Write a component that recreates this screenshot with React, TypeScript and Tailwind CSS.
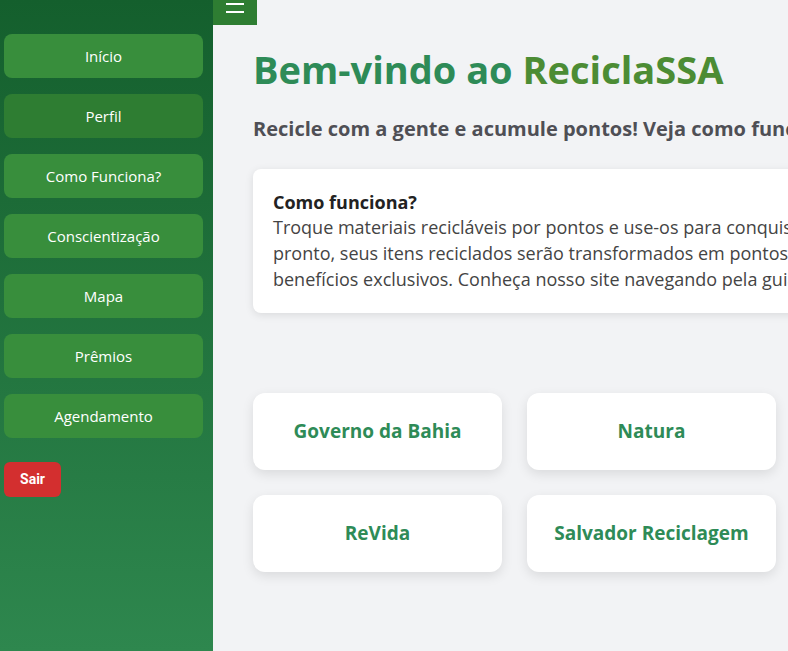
import React from "react";

const menu = ["Início", "Perfil", "Como Funciona?", "Conscientização", "Mapa", "Prêmios", "Agendamento"];
const partners = ["Governo da Bahia", "Natura", "Parceiro Verde", "ReVida", "Salvador Reciclagem", "EcoPonto"];

export default function App() {
  return (
    <div className="flex h-[651px] w-[788px] overflow-hidden bg-[#f2f3f5] font-['Open_Sans',sans-serif]">
      <aside className="flex w-[213px] shrink-0 flex-col bg-gradient-to-b from-[#145f2d] to-[#2e874e] px-[4px] pt-[34px]">
        <nav className="flex flex-col gap-[16px]">
          {menu.map((item) => (
            <button
              key={item}
              className={
                "h-[44px] w-[199px] rounded-[8px] text-[15px] text-white " +
                (item === "Perfil" ? "bg-[#2e7d32]" : "bg-[#388e3c]")
              }
            >
              {item}
            </button>
          ))}
        </nav>
        <button className="mt-[24px] h-[35px] w-[57px] rounded-[6px] bg-[#d32f2f] font-['Roboto',sans-serif] text-[14px] font-bold text-white">
          Sair
        </button>
      </aside>

      <main className="relative flex-1">
        <div className="absolute left-0 top-0 flex h-[25px] w-[44px] items-start justify-center bg-[#2e7d32] pt-[3px]">
          <svg width="18" height="12" viewBox="0 0 18 12">
            <rect x="0" y="0" width="18" height="2" fill="white" />
            <rect x="0" y="8" width="18" height="2" fill="white" />
          </svg>
        </div>

        <div className="w-[1100px] px-[40px] pt-[44px]">
          <h1 className="text-[38px] font-bold leading-[50px]">
            <span className="text-[#2e8b57]">Bem-vindo ao </span>
            <span className="text-[#4c8c34]">ReciclaSSA</span>
          </h1>
          <h2 className="mt-[20px] text-[20px] font-bold text-[#4f4f55]">
            Recicle com a gente e acumule pontos! Veja como funciona e comece a reciclar hoje mesmo.
          </h2>

          <div className="mt-[25px] w-[900px] rounded-[8px] bg-white px-[20px] py-[21px] shadow-[0_2px_8px_rgba(0,0,0,0.1)]">
            <h3 className="text-[18px] font-bold leading-[24px] text-[#222]">Como funciona?</h3>
            <p className="whitespace-nowrap text-[18px] leading-[26px] text-[#444]">
              Troque materiais recicláveis por pontos e use-os para conquistar prêmios incríveis. É simples e rápido:
              <br />
              pronto, seus itens reciclados serão transformados em pontos que poderão ser trocados por descontos e
              <br />
              benefícios exclusivos. Conheça nosso site navegando pela guia lateral.
            </p>
          </div>

          <div className="mt-[80px] grid w-[797px] grid-cols-3 gap-[25px]">
            {partners.map((p) => (
              <div
                key={p}
                className="flex h-[77px] items-center justify-center rounded-[12px] bg-white text-[19px] font-bold text-[#2e8b57] shadow-[0_4px_12px_rgba(0,0,0,0.1)]"
              >
                {p}
              </div>
            ))}
          </div>
        </div>
      </main>
    </div>
  );
}
